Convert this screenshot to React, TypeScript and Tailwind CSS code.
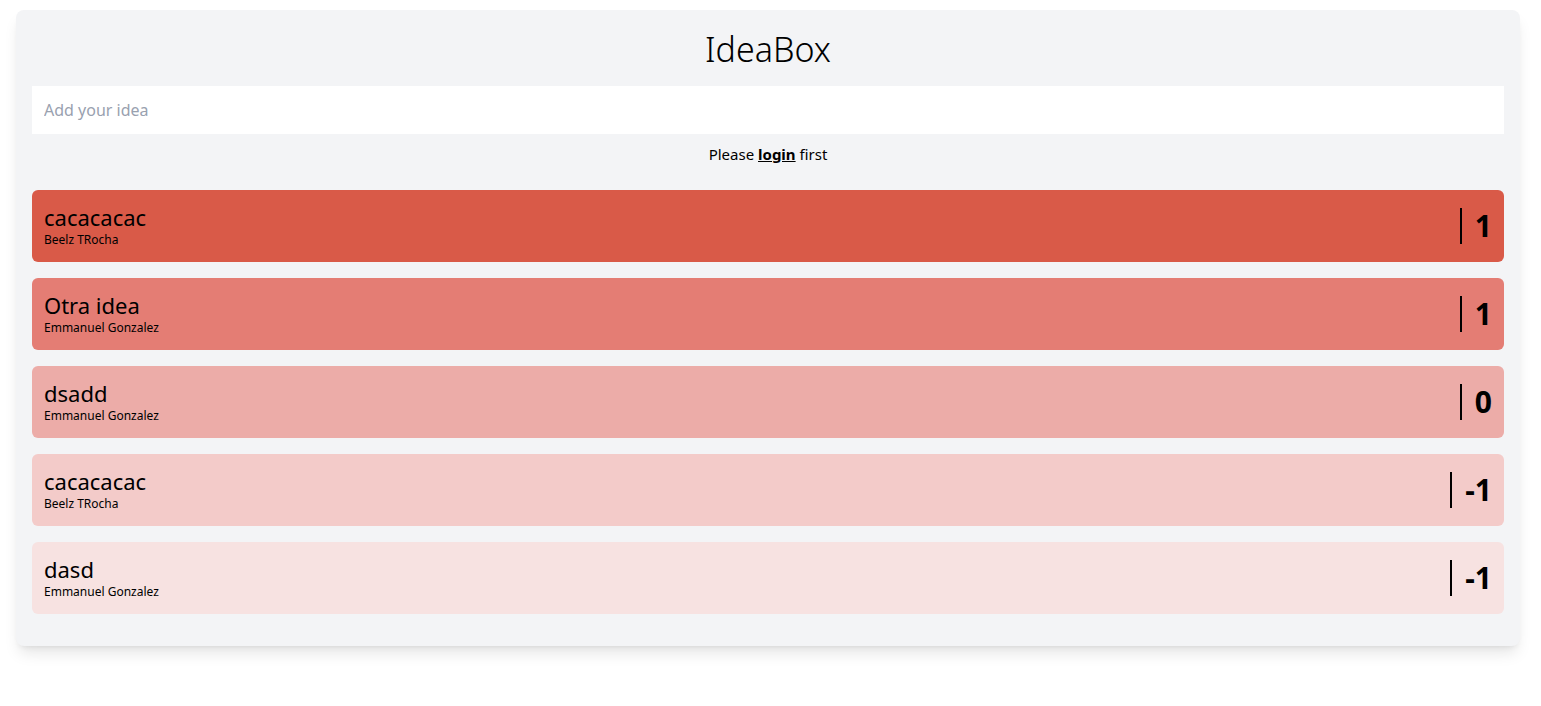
import React from 'react';

interface Idea {
  title: string;
  author: string;
  votes: number;
  color: string;
}

const ideas: Idea[] = [
  { title: 'cacacacac', author: 'Beelz TRocha', votes: 1, color: 'bg-[#d95a48]' },
  { title: 'Otra idea', author: 'Emmanuel Gonzalez', votes: 1, color: 'bg-[#e47d74]' },
  { title: 'dsadd', author: 'Emmanuel Gonzalez', votes: 0, color: 'bg-[#ecaca8]' },
  { title: 'cacacacac', author: 'Beelz TRocha', votes: -1, color: 'bg-[#f3cbc9]' },
  { title: 'dasd', author: 'Emmanuel Gonzalez', votes: -1, color: 'bg-[#f7e2e1]' },
];

const IdeaRow = ({ idea }: { idea: Idea }) => (
  <div className={`flex h-[72px] items-center justify-between rounded-md px-3 ${idea.color}`}>
    <div className="flex flex-col pb-[2px]">
      <span className="text-[22px] leading-7 text-black">{idea.title}</span>
      <span className="mt-[1px] text-xs leading-4 text-black">{idea.author}</span>
    </div>
    <div className="flex items-center">
      <div className="h-[36px] border-l-2 border-black" />
      <span className="pl-[13px] text-[30px] font-bold leading-9 text-black">{idea.votes}</span>
    </div>
  </div>
);

export default function App() {
  return (
    <div className="min-h-[706px] bg-white pt-[10px] font-['Noto_Sans',sans-serif]">
      <div className="ml-4 w-[1504px] rounded-lg bg-gray-100 px-4 pb-8 pt-[19px] shadow-lg">
        <h1 className="text-center text-[34px] font-light leading-10 text-black">IdeaBox</h1>
        <input
          type="text"
          placeholder="Add your idea"
          className="mt-[17px] h-12 w-full bg-white px-3 text-base outline-none placeholder:text-gray-400"
        />
        <p className="mt-2 text-center text-[15px] leading-6 text-black">
          Please <a href="#" className="font-bold underline">login</a> first
        </p>
        <div className="mt-6 flex flex-col gap-4">
          {ideas.map((idea, index) => (
            <IdeaRow key={index} idea={idea} />
          ))}
        </div>
      </div>
    </div>
  );
}
